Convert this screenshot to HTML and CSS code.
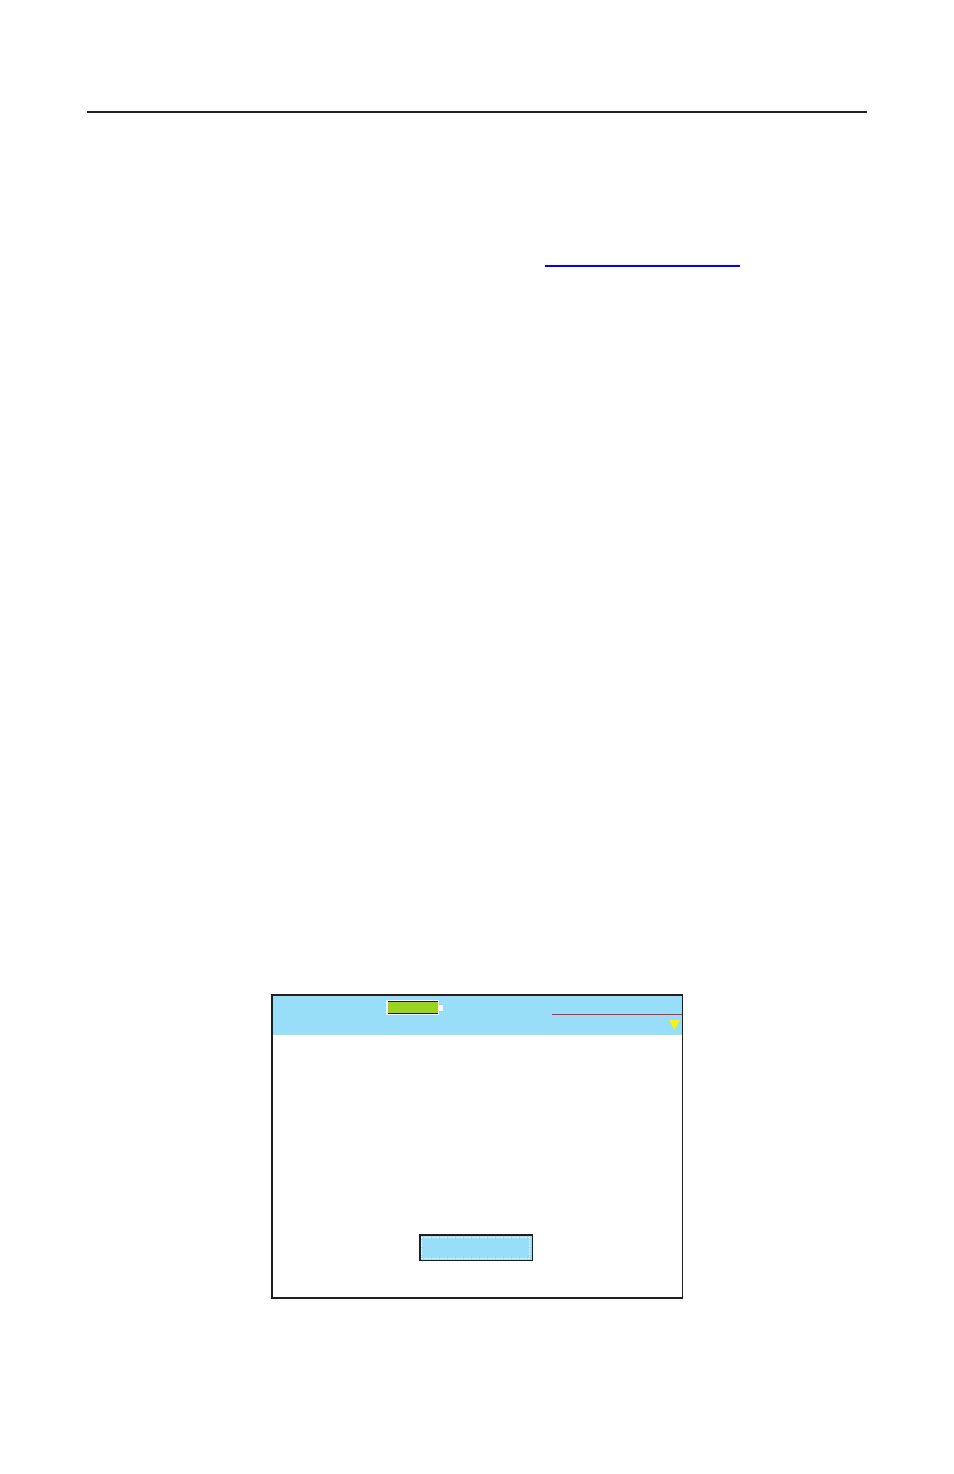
FILE: index.html
```html
<!DOCTYPE html>
<html lang="en">
<head>
<meta charset="utf-8">
<meta name="viewport" content="width=device-width, initial-scale=1">
<title>Device screen</title>
<link rel="stylesheet" href="styles.css">
</head>
<body>
<main class="page">
  <hr class="rule">
  <div class="link-row"><a class="link" href="#screen" aria-label="Link"></a></div>
  <section class="screen" id="screen" aria-label="Device display">
    <header class="status">
      <svg class="battery" width="57" height="15" viewBox="0 0 57 15" shape-rendering="crispEdges" aria-hidden="true">
        <rect width="53" height="15" fill="#fff"/>
        <rect x="53" y="5" width="4" height="6" fill="#fff"/>
        <rect x="2" y="1" width="50" height="13" fill="#231f20"/>
        <rect x="2" y="2" width="50" height="11" fill="#99d420"/>
      </svg>
      <div class="signal">
        <svg class="marker" width="11" height="10" viewBox="0 0 11 10" aria-hidden="true">
          <path d="M0 0H11L5.500 10Z" fill="#fff200"/>
        </svg>
      </div>
    </header>
    <div class="content">
      <button class="action" type="button" aria-label="Confirm">
        <svg class="focus" width="109" height="22" viewBox="0 0 109 22" aria-hidden="true">
          <path d="M0 .5H109M0 21.500H109M.5 0V22M108.500 0V22" fill="none" stroke="#fff" stroke-dasharray="2 1 1 1 2 1"/>
        </svg>
      </button>
    </div>
  </section>
</main>
</body>
</html>
```

FILE: styles.css
```css
* {
  box-sizing: border-box;
}

body {
  margin: 0;
  background: #fff;
  font-family: "Liberation Sans", Arial, sans-serif;
}

.page {
  display: flex;
  flex-direction: column;
  padding: 111px 87px 175px;
}

.rule {
  width: 100%;
  height: 2px;
  margin: 0;
  border: 0;
  background: #231f20;
}

.link-row {
  display: flex;
  justify-content: flex-end;
  padding: 132px 127px 0 0;
}

.link {
  width: 195px;
  height: 22px;
  border-bottom: 2px solid #00f;
}

.screen {
  width: 100%;
  max-width: 412px;
  margin: 727px auto 0;
  border: 2px solid #231f20;
  border-right-width: 1px;
}

.status {
  display: flex;
  justify-content: space-between;
  height: 39px;
  padding: 4px 0 0 113px;
  background: #99def9;
}

.battery {
  display: block;
}

.signal {
  display: flex;
  justify-content: flex-end;
  align-items: flex-start;
  width: 130px;
  height: 16px;
  margin-top: 14px;
  padding: 5px 2px 0 0;
  border-top: 1px solid #ed1c24;
}

.marker {
  display: block;
  flex: none;
}

.content {
  display: flex;
  justify-content: center;
  padding: 199px 3px 36px 0;
}

.action {
  display: flex;
  width: 114px;
  height: 27px;
  padding: 1px 2px 1px 0;
  border: 2px solid #231f20;
  border-right-width: 1px;
  border-bottom-width: 1px;
  border-radius: 0;
  background: #99def9;
}

.focus {
  display: block;
  flex: none;
}
```
